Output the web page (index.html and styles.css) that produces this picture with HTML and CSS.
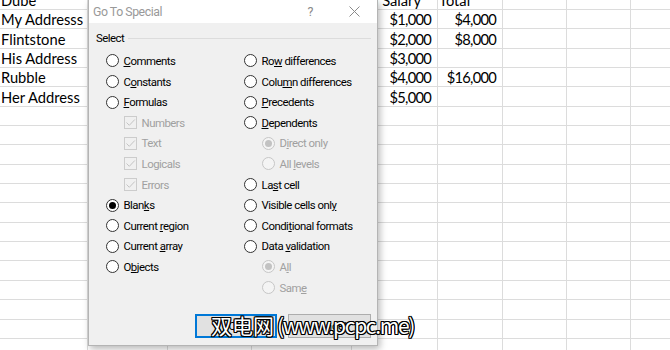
FILE: index.html
```html
<!DOCTYPE html>
<html>
<head>
<meta charset="utf-8">
<link rel="stylesheet" href="styles.css">
</head>
<body>
<div class="sheet">
  <div class="row"><i class="c">Dube</i><i class="c"></i><i class="c"></i><i class="c"></i><i class="c hdr">Annual Salary</i><i class="c">Total</i><i class="c"></i><i class="c"></i><i class="c"></i></div>
  <div class="row"><i class="c">My Addresss</i><i class="c"></i><i class="c"></i><i class="c"></i><i class="c r">$1,000</i><i class="c r">$4,000</i><i class="c"></i><i class="c"></i><i class="c"></i></div>
  <div class="row"><i class="c">Flintstone</i><i class="c"></i><i class="c"></i><i class="c"></i><i class="c r">$2,000</i><i class="c r">$8,000</i><i class="c"></i><i class="c"></i><i class="c"></i></div>
  <div class="row"><i class="c">His Address</i><i class="c"></i><i class="c"></i><i class="c"></i><i class="c r">$3,000</i><i class="c r"></i><i class="c"></i><i class="c"></i><i class="c"></i></div>
  <div class="row"><i class="c">Rubble</i><i class="c"></i><i class="c"></i><i class="c"></i><i class="c r">$4,000</i><i class="c r">$16,000</i><i class="c"></i><i class="c"></i><i class="c"></i></div>
  <div class="row"><i class="c">Her Address</i><i class="c"></i><i class="c"></i><i class="c"></i><i class="c r">$5,000</i><i class="c r"></i><i class="c"></i><i class="c"></i><i class="c"></i></div>
  <div class="row"><i class="c"></i><i class="c"></i><i class="c"></i><i class="c"></i><i class="c"></i><i class="c"></i><i class="c"></i><i class="c"></i><i class="c"></i></div>
  <div class="row"><i class="c"></i><i class="c"></i><i class="c"></i><i class="c"></i><i class="c"></i><i class="c"></i><i class="c"></i><i class="c"></i><i class="c"></i></div>
  <div class="row"><i class="c"></i><i class="c"></i><i class="c"></i><i class="c"></i><i class="c"></i><i class="c"></i><i class="c"></i><i class="c"></i><i class="c"></i></div>
  <div class="row"><i class="c"></i><i class="c"></i><i class="c"></i><i class="c"></i><i class="c"></i><i class="c"></i><i class="c"></i><i class="c"></i><i class="c"></i></div>
  <div class="row"><i class="c"></i><i class="c"></i><i class="c"></i><i class="c"></i><i class="c"></i><i class="c"></i><i class="c"></i><i class="c"></i><i class="c"></i></div>
  <div class="row"><i class="c"></i><i class="c"></i><i class="c"></i><i class="c"></i><i class="c"></i><i class="c"></i><i class="c"></i><i class="c"></i><i class="c"></i></div>
  <div class="row"><i class="c"></i><i class="c"></i><i class="c"></i><i class="c"></i><i class="c"></i><i class="c"></i><i class="c"></i><i class="c"></i><i class="c"></i></div>
  <div class="row"><i class="c"></i><i class="c"></i><i class="c"></i><i class="c"></i><i class="c"></i><i class="c"></i><i class="c"></i><i class="c"></i><i class="c"></i></div>
  <div class="row"><i class="c"></i><i class="c"></i><i class="c"></i><i class="c"></i><i class="c"></i><i class="c"></i><i class="c"></i><i class="c"></i><i class="c"></i></div>
  <div class="row"><i class="c"></i><i class="c"></i><i class="c"></i><i class="c"></i><i class="c"></i><i class="c"></i><i class="c"></i><i class="c"></i><i class="c"></i></div>
  <div class="row"><i class="c"></i><i class="c"></i><i class="c"></i><i class="c"></i><i class="c"></i><i class="c"></i><i class="c"></i><i class="c"></i><i class="c"></i></div>
  <div class="row"><i class="c"></i><i class="c"></i><i class="c"></i><i class="c"></i><i class="c"></i><i class="c"></i><i class="c"></i><i class="c"></i><i class="c"></i></div>
  <div class="row"><i class="c"></i><i class="c"></i><i class="c"></i><i class="c"></i><i class="c"></i><i class="c"></i><i class="c"></i><i class="c"></i><i class="c"></i></div>
</div>

<div class="dialog">
  <div class="titlebar">
    <span class="title">Go To Special</span>
    <span class="help">?</span>
    <svg class="close" width="11" height="11" viewBox="0 0 11 11"><path d="M0.5 0.5 L10.5 10.5 M10.5 0.5 L0.5 10.5" stroke="#8a8a8a" stroke-width="1" fill="none"/></svg>
  </div>
  <div class="body">
    <div class="group"><span>Select</span><i class="rule"></i></div>
    <div class="cols">
      <div class="col left">
        <div class="item"><i class="radio"></i><span><u>C</u>omments</span></div>
        <div class="item"><i class="radio"></i><span>C<u>o</u>nstants</span></div>
        <div class="item"><i class="radio"></i><span><u>F</u>ormulas</span></div>
        <div class="item sub dis"><i class="check"><svg width="11" height="11" viewBox="0 0 11 11"><path d="M1.5 5.5 L4.3 8.3 L9.8 2.5" stroke="#c4c4c4" stroke-width="1" fill="none"/></svg></i><span>Numbers</span></div>
        <div class="item sub dis"><i class="check"><svg width="11" height="11" viewBox="0 0 11 11"><path d="M1.5 5.5 L4.3 8.3 L9.8 2.5" stroke="#c4c4c4" stroke-width="1" fill="none"/></svg></i><span>Text</span></div>
        <div class="item sub dis"><i class="check"><svg width="11" height="11" viewBox="0 0 11 11"><path d="M1.5 5.5 L4.3 8.3 L9.8 2.5" stroke="#c4c4c4" stroke-width="1" fill="none"/></svg></i><span>Logicals</span></div>
        <div class="item sub dis"><i class="check"><svg width="11" height="11" viewBox="0 0 11 11"><path d="M1.5 5.5 L4.3 8.3 L9.8 2.5" stroke="#c4c4c4" stroke-width="1" fill="none"/></svg></i><span>Errors</span></div>
        <div class="item"><i class="radio on"></i><span>Blan<u>k</u>s</span></div>
        <div class="item"><i class="radio"></i><span>Current <u>r</u>egion</span></div>
        <div class="item"><i class="radio"></i><span>Current <u>a</u>rray</span></div>
        <div class="item"><i class="radio"></i><span>O<u>b</u>jects</span></div>
      </div>
      <div class="col right">
        <div class="item"><i class="radio"></i><span>Ro<u>w</u> differences</span></div>
        <div class="item"><i class="radio"></i><span>Colu<u>m</u>n differences</span></div>
        <div class="item"><i class="radio"></i><span><u>P</u>recedents</span></div>
        <div class="item"><i class="radio"></i><span><u>D</u>ependents</span></div>
        <div class="item sub dis"><i class="radio on"></i><span>D<u>i</u>rect only</span></div>
        <div class="item sub dis"><i class="radio"></i><span>All <u>l</u>evels</span></div>
        <div class="item"><i class="radio"></i><span>La<u>s</u>t cell</span></div>
        <div class="item"><i class="radio"></i><span>Visible cells onl<u>y</u></span></div>
        <div class="item"><i class="radio"></i><span>Condi<u>t</u>ional formats</span></div>
        <div class="item"><i class="radio"></i><span>Data <u>v</u>alidation</span></div>
        <div class="item sub dis"><i class="radio on"></i><span>A<u>l</u>l</span></div>
        <div class="item sub dis"><i class="radio"></i><span>Sam<u>e</u></span></div>
      </div>
    </div>
    <div class="buttons">
      <button class="btn ok">OK</button>
      <button class="btn">Cancel</button>
    </div>
  </div>
</div>

<div class="watermark">双电网<span class="wm-latin">(www.pcpc.me)</span></div>
</body>
</html>
```

FILE: styles.css
```css
html, body {
  margin: 0;
  padding: 0;
}
body {
  width: 670px;
  height: 350px;
  overflow: hidden;
  position: relative;
  background: #ffffff;
  font-family: Lato, "Liberation Sans", sans-serif;
}

/* ---------- spreadsheet ---------- */
.sheet {
  margin-top: -9.35px;
  display: flex;
  flex-direction: column;
}
.row {
  display: grid;
  grid-template-columns: 88px 80px 84px 100px 86px 65px 64px 64px 64px;
  height: 19.35px;
}
.c {
  font-style: normal;
  box-sizing: border-box;
  border-right: 1px solid #dcdcdc;
  border-bottom: 1px solid #dcdcdc;
  font-size: 14.7px;
  line-height: 15px;
  color: #000;
  display: flex;
  align-items: flex-end;
  padding: 0 2px 1px 1px;
  white-space: nowrap;
}
.c.r {
  justify-content: flex-end;
  padding-right: 6px;
  letter-spacing: -0.75px;
}
.c.hdr {
  flex-direction: row-reverse;
  justify-content: flex-start;
  padding-right: 16px;
}

/* ---------- dialog ---------- */
.dialog {
  position: absolute;
  left: 88px;
  top: 0;
  width: 290px;
  height: 346px;
  box-sizing: border-box;
  background: #f0f0f0;
  border: 1px solid #b4b4b4;
  border-top: none;
  box-shadow: 2px 3px 7px rgba(0, 0, 0, 0.28);
  display: flex;
  flex-direction: column;
  font-family: Roboto, "Open Sans", sans-serif;
  font-size: 11.4px;
  letter-spacing: -0.5px;
  color: #000;
}
.titlebar {
  height: 23px;
  flex: none;
  background: #ffffff;
  display: flex;
  align-items: center;
  padding-left: 4px;
  color: #999999;
  font-size: 12.3px;
  letter-spacing: -0.45px;
}
.title {
  flex: 1;
}
.help {
  font-size: 12.5px;
  color: #8a8a8a;
  margin-right: 36px;
}
.close {
  margin-right: 17px;
}
.body {
  flex: 1;
  display: flex;
  flex-direction: column;
  padding: 7px 6px 7px 7px;
}
.group {
  display: flex;
  align-items: center;
  height: 16px;
}
.rule {
  flex: 1;
  height: 1px;
  background: #dcdcdc;
  margin-left: 4px;
}
.cols {
  display: flex;
  margin-top: 4.7px;
  padding-left: 9.5px;
}
.col.left {
  width: 138px;
}
.item {
  height: 20.6px;
  display: flex;
  align-items: center;
  gap: 5px;
  white-space: nowrap;
}
.item u {
  text-decoration-thickness: 1px;
  text-underline-offset: 1px;
}
.item.sub {
  margin-left: 18px;
}
.item.dis {
  color: #a0a0a0;
}
.radio {
  width: 13px;
  height: 13px;
  flex: none;
  box-sizing: border-box;
  border-radius: 50%;
  border: 1px solid #333333;
  background: #ffffff;
  display: flex;
  align-items: center;
  justify-content: center;
}
.radio.on::after {
  content: "";
  width: 7px;
  height: 7px;
  border-radius: 50%;
  background: #000;
}
.dis .radio {
  border-color: #c6c6c6;
  background: #f4f4f4;
}
.dis .radio.on::after {
  background: #c2c2c2;
}
.check {
  width: 13px;
  height: 13px;
  flex: none;
  box-sizing: border-box;
  border: 1px solid #cccccc;
  background: #f0f0f0;
  display: flex;
}
.buttons {
  margin-top: auto;
  display: flex;
  justify-content: flex-end;
  gap: 11px;
}
.btn {
  width: 83px;
  height: 24px;
  box-sizing: border-box;
  border: 1px solid #adadad;
  background: #e1e1e1;
  font-family: Roboto, "Open Sans", sans-serif;
  font-size: 11.4px;
  color: #000;
  padding: 0;
}
.btn.ok {
  width: 82px;
  border-color: #0078d7;
  box-shadow: inset 0 0 0 1px #0078d7;
}

/* ---------- watermark ---------- */
.watermark {
  position: absolute;
  left: 211px;
  top: 311px;
  font-family: "Noto Sans CJK SC", sans-serif;
  font-size: 21px;
  line-height: 28px;
  color: #ffffff;
  white-space: nowrap;
  text-shadow: 1px 0 0 #000, -1px 0 0 #000, 0 1px 0 #000, 0 -1px 0 #000, 1px 1px 0 #000, -1px -1px 0 #000, 1px -1px 0 #000, -1px 1px 0 #000;
}
.wm-latin {
  letter-spacing: -1.3px;
  margin-left: 3px;
}
```
